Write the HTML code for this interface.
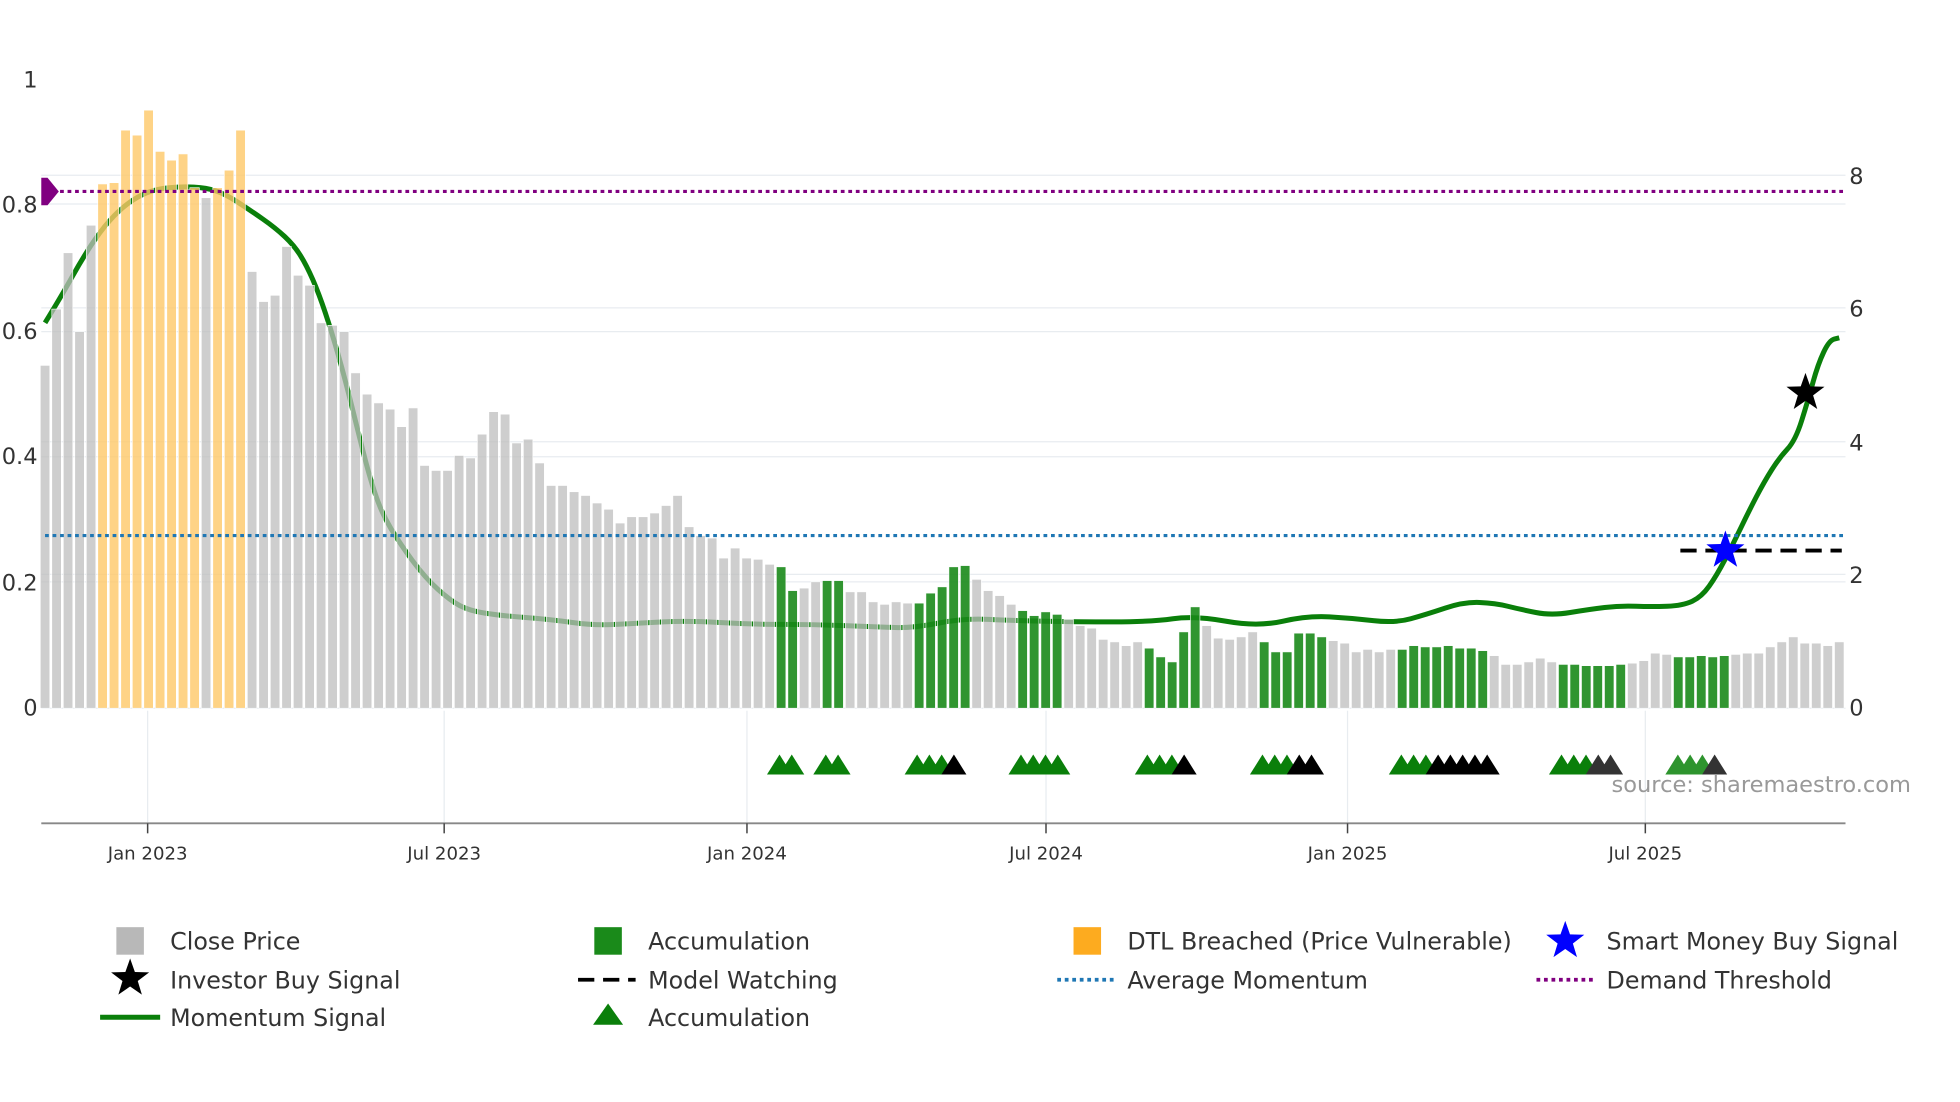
<!DOCTYPE html>
<html><head><meta charset="utf-8">
<style>
html,body{margin:0;padding:0;background:#fff;width:1960px;height:1102px;overflow:hidden}
svg{display:block}
text{font-family:"DejaVu Sans","Liberation Sans",sans-serif}
</style></head>
<body>
<svg id="s" width="1960" height="1102" viewBox="0 0 1566.5 880.7" xmlns="http://www.w3.org/2000/svg">
<g stroke="#e8ecf0" stroke-width="1">
<line x1="33" x2="1475" y1="140" y2="140"/><line x1="33" x2="1475" y1="163" y2="163"/>
<line x1="33" x2="1475" y1="246" y2="246"/><line x1="33" x2="1475" y1="265" y2="265"/>
<line x1="33" x2="1475" y1="353" y2="353"/><line x1="33" x2="1475" y1="365" y2="365"/>
<line x1="33" x2="1475" y1="459" y2="459"/><line x1="33" x2="1475" y1="465" y2="465"/>
<line x1="33" x2="1475" y1="566" y2="566"/>
<line x1="118" x2="118" y1="568" y2="658"/><line x1="355" x2="355" y1="568" y2="658"/>
<line x1="597" x2="597" y1="568" y2="658"/><line x1="836" x2="836" y1="568" y2="658"/>
<line x1="1077" x2="1077" y1="568" y2="658"/><line x1="1315" x2="1315" y1="568" y2="658"/>
</g>
<g id="line"></g>
<g id="bars"></g>
<line x1="36" x2="1475" y1="428" y2="428" stroke="#1f77b4" stroke-width="2.5" stroke-dasharray="3,3"/>
<line x1="42" x2="1475" y1="153" y2="153" stroke="#800080" stroke-width="2.5" stroke-dasharray="3,3"/>
<polygon points="33,142 38,142 47,153 38,164 33,164" fill="#800080"/>
<line x1="1343" x2="1472" y1="440" y2="440" stroke="#000" stroke-width="3" stroke-dasharray="13,7"/>
<g id="tri"></g>
<g id="stars"></g>
<line x1="33" x2="1475" y1="658" y2="658" stroke="#888" stroke-width="1.5"/>
<g stroke="#444" stroke-width="1.2">
<line x1="118" x2="118" y1="658" y2="666"/><line x1="355" x2="355" y1="658" y2="666"/><line x1="597" x2="597" y1="658" y2="666"/><line x1="836" x2="836" y1="658" y2="666"/><line x1="1077" x2="1077" y1="658" y2="666"/><line x1="1315" x2="1315" y1="658" y2="666"/>
</g>
<g font-size="14.5" fill="#333" text-anchor="middle">
<text x="118" y="687">Jan 2023</text><text x="355" y="687">Jul 2023</text><text x="597" y="687">Jan 2024</text><text x="836" y="687">Jul 2024</text><text x="1077" y="687">Jan 2025</text><text x="1315" y="687">Jul 2025</text>
</g>
<g font-size="18" fill="#333" text-anchor="end">
<text x="30" y="70">1</text><text x="30" y="170">0.8</text><text x="30" y="271">0.6</text><text x="30" y="371">0.4</text><text x="30" y="472">0.2</text><text x="30" y="572">0</text>
</g>
<g font-size="18" fill="#333">
<text x="1478" y="147">8</text><text x="1478" y="253">6</text><text x="1478" y="360">4</text><text x="1478" y="466">2</text><text x="1478" y="572">0</text>
</g>
<text x="1288" y="633" font-size="18" fill="#999">source: sharemaestro.com</text>
<g font-size="19" fill="#333">
<rect x="93" y="741" width="22" height="22" fill="#b8b8b8"/><text x="136" y="759">Close Price</text>
<rect x="475" y="741" width="22" height="22" fill="#1a8a1a"/><text x="518" y="759">Accumulation</text>
<rect x="858" y="741" width="22" height="22" fill="#fdab1f"/><text x="901" y="759">DTL Breached (Price Vulnerable)</text>
<text x="1284" y="759">Smart Money Buy Signal</text>
<text x="136" y="790">Investor Buy Signal</text>
<line x1="462" x2="508" y1="783" y2="783" stroke="#000" stroke-width="3" stroke-dasharray="13,7"/><text x="518" y="790">Model Watching</text>
<line x1="845" x2="890" y1="783" y2="783" stroke="#1f77b4" stroke-width="3" stroke-dasharray="3,3"/><text x="901" y="790">Average Momentum</text>
<line x1="1228" x2="1273" y1="783" y2="783" stroke="#800080" stroke-width="3" stroke-dasharray="3,3"/><text x="1284" y="790">Demand Threshold</text>
<line x1="80" x2="128" y1="813" y2="813" stroke="#0a7f0a" stroke-width="4"/><text x="136" y="820">Momentum Signal</text>
<polygon points="474,819 486,802 498,819" fill="#0a7f0a"/><text x="518" y="820">Accumulation</text>
</g>
</svg>
<script>
var NS="http://www.w3.org/2000/svg";
function el(p,t,a){var e=document.createElementNS(NS,t);for(var k in a)e.setAttribute(k,a[k]);p.appendChild(e);return e;}
var d="292g247g202g265g180g147o146o104o108o88o121o128o123o150o158g150o136o104o217g241g236g197g220g228g258g260g265g298g315g322g327g341g326g372g376g376g364g366g347g329g331g354g351g370g388g388g393g396g402g407g418g413g413g410g404g396g421g428g430g446g438g446g447g451g453G472G470g465g464G464G473g473g481g483g481g482g482G474G469G453G452G463g472g476g483g488G492G489G491G495g500g502g511g513g516g513g518G525G529G505G485G500g510g511g509g505g513G521G521G506G506G509G512g514g521g519g521g519g519G516G517G517G516G518G518G520G524g531g531g529g526g529g531G531G532G532G532G531G530g528g522g523g525G525G524G525G524G523g522g522g517g513g509g514g514g516g513g";
var arr=d.match(/\d+[gGo]/g);var b=document.getElementById("bars");
var n=arr.length,x0=36,x1=1470,st=(x1-x0)/(n-1);
var col={g:"#bdbdbd",G:"#1a8a1a",o:"#fec868"};
arr.forEach(function(s,i){var y=+s.slice(0,-1),c=s.slice(-1);var x=x0+i*st;
el(b,"rect",{x:x-3.8,y:y,width:7.6,height:566-y,fill:col[c],"fill-opacity":c=="G"?0.9:(c=="o"?0.8:0.75),stroke:"#fff","stroke-width":0.5});});
var pts=[[36,258],[50,235],[65,208],[80,185],[95,168],[110,157],[125,151],[145,149],[165,150],[180,155],[200,168],[220,182],[235,196],[245,212],[255,235],[265,265],[275,300],[285,340],[295,380],[305,410],[320,435],[340,462],[360,480],[375,488],[400,492],[440,495],[475,500],[510,498],[550,496],[600,499],[650,499],[700,501],[730,502],[770,494],[810,496],[860,497],[920,497],[955,492],[1005,501],[1045,492],[1080,494],[1115,498],[1140,491],[1170,481],[1195,482],[1215,487],[1240,492],[1270,487],[1295,484],[1320,485],[1345,484],[1360,477],[1372,460],[1385,435],[1398,408],[1410,385],[1422,366],[1435,352],[1445,320],[1453,291],[1462,272],[1470,270]];
var p="M"+pts[0].join(",");for(var i=1;i<pts.length-1;i++){var mx=(pts[i][0]+pts[i+1][0])/2,my=(pts[i][1]+pts[i+1][1])/2;p+=" Q"+pts[i].join(",")+" "+mx+","+my;}p+=" L"+pts[pts.length-1].join(",");
el(document.getElementById("line"),"path",{d:p,fill:"none",stroke:"#0a7f0a","stroke-width":4,"stroke-linejoin":"round"});
var T=document.getElementById("tri");
var groups=[[623,"gg"],[660,"gg"],[733,"gggk"],[816,"gggg"],[917,"gggk"],[1009,"gggkk"],[1120,"gggkkkkk"],[1248,"gggDD"],[1341,"LLLD"]];
var tc={g:"#0a7f0a",k:"#000",D:"#333",L:"#2e942e"};
groups.forEach(function(g){for(var i=0;i<g[1].length;i++){var x=g[0]+i*9.8;el(T,"polygon",{points:(x-10)+",619 "+x+",603 "+(x+10)+",619",fill:tc[g[1][i]]});}});
function star(cx,cy,R,fill){var s="";for(var i=0;i<10;i++){var r=i%2?R*0.4:R,a=Math.PI/5*i-Math.PI/2;s+=(cx+r*Math.cos(a)).toFixed(1)+","+(cy+r*Math.sin(a)).toFixed(1)+" ";}el(document.getElementById("stars"),"polygon",{points:s,fill:fill});}
star(1443,314,16,"#000");star(1379,440,16,"#0000ff");star(104,782,16,"#000");star(1251,752,16,"#0000ff");
</script>
</body></html>
